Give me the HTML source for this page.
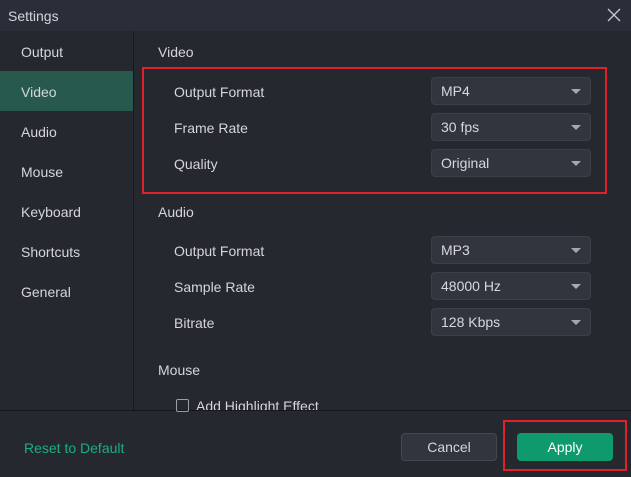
<!DOCTYPE html>
<html><head><style>
*{margin:0;padding:0;box-sizing:border-box}
body{width:631px;height:477px;background:#262830;font-family:"Liberation Sans",sans-serif;color:#d4d6dc;font-size:14px;position:relative;overflow:hidden}
.a{position:absolute}
.t{line-height:20px;transform:translateY(-10px)}
.sel{position:absolute;left:431px;width:160px;height:28px;background:#32353e;border:1px solid #3c3f49;border-radius:4px;padding-left:9px;line-height:26px;color:#d6d8de}
.sel:after{content:"";position:absolute;right:9px;top:11px;border-left:5px solid transparent;border-right:5px solid transparent;border-top:5px solid #a6a9b0}
</style></head><body>
<div class="a" style="left:0;top:0;width:631px;height:31px;background:#2b2e38"></div>
<div class="a t" style="left:8px;top:16px;font-size:14px">Settings</div>
<svg class="a" style="left:606px;top:7px" width="16" height="16"><path d="M2 2L14 14M14 2L2 14" stroke="#c8cad0" stroke-width="1.3"/></svg>
<div class="a" style="left:133px;top:31px;width:1px;height:380px;background:#16181c"></div>
<div class="a" style="left:0;top:410px;width:631px;height:1px;background:#16181c"></div>
<div class="a" style="left:0;top:71px;width:133px;height:40px;background:#275a4c"></div>
<div class="a t" style="left:21px;top:52px">Output</div>
<div class="a t" style="left:21px;top:92px">Video</div>
<div class="a t" style="left:21px;top:132px">Audio</div>
<div class="a t" style="left:21px;top:172px">Mouse</div>
<div class="a t" style="left:21px;top:212px">Keyboard</div>
<div class="a t" style="left:21px;top:252px">Shortcuts</div>
<div class="a t" style="left:21px;top:292px">General</div>
<div class="a t" style="left:158px;top:52px">Video</div>
<div class="a" style="left:142px;top:67px;width:465px;height:127px;border:2px solid #e0202a"></div>
<div class="a t" style="left:174px;top:92px">Output Format</div>
<div class="a t" style="left:174px;top:128px">Frame Rate</div>
<div class="a t" style="left:174px;top:164px">Quality</div>
<div class="sel" style="top:77px">MP4</div>
<div class="sel" style="top:113px">30 fps</div>
<div class="sel" style="top:149px">Original</div>
<div class="a t" style="left:158px;top:212px">Audio</div>
<div class="a t" style="left:174px;top:251px">Output Format</div>
<div class="a t" style="left:174px;top:287px">Sample Rate</div>
<div class="a t" style="left:174px;top:323px">Bitrate</div>
<div class="sel" style="top:236px">MP3</div>
<div class="sel" style="top:272px">48000 Hz</div>
<div class="sel" style="top:308px">128 Kbps</div>
<div class="a t" style="left:158px;top:370px">Mouse</div>
<div class="a" style="left:176px;top:399px;width:13px;height:13px;border:1px solid #9a9da4;border-radius:2px"></div>
<div class="a" style="left:196px;top:396px;height:14px;overflow:hidden;line-height:20px">Add Highlight Effect</div>
<div class="a t" style="left:24px;top:448px;color:#19b07c">Reset to Default</div>
<div class="a" style="left:401px;top:433px;width:96px;height:28px;background:#32353e;border:1px solid #44474f;border-radius:4px;text-align:center;line-height:26px">Cancel</div>
<div class="a" style="left:503px;top:420px;width:124px;height:51px;border:2px solid #e0202a"></div>
<div class="a" style="left:517px;top:433px;width:96px;height:28px;background:#0f9a6e;border-radius:4px;text-align:center;line-height:28px;color:#fff">Apply</div>
</body></html>
